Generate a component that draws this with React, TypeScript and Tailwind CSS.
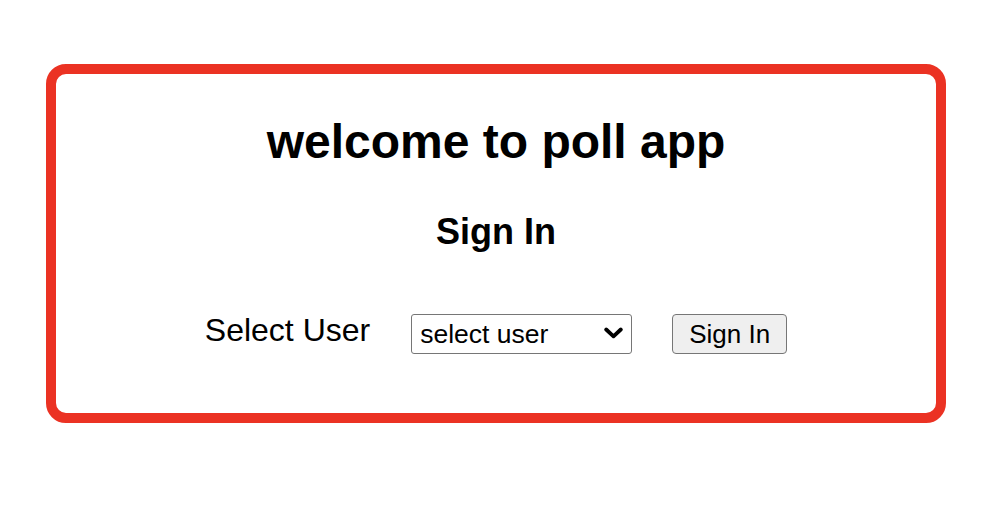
import React from "react";

export default function App() {
  return (
    <div className="w-[988px] h-[524px] bg-white overflow-hidden" style={{ fontFamily: '"Liberation Sans", Arial, sans-serif' }}>
      <div className="ml-[46px] mt-[64px] w-[900px] h-[359px] border-[10px] border-[#eb3223] rounded-[20px] flex flex-col items-center text-black">
        <h1 className="mt-[44px] text-[48px] leading-none font-bold">welcome to poll app</h1>
        <h2 className="mt-[48px] text-[36px] leading-none font-bold">Sign In</h2>
        <div className="mt-[64px] flex flex-row items-center">
          <label className="text-[32px] leading-none mb-2">Select User</label>
          <div className="relative ml-[41px] w-[221px] h-[40px]">
            <select
              className="appearance-none w-full h-full border border-[#767676] rounded-[3px] bg-white pl-[8px] text-[26.5px] leading-none text-black outline-none"
              defaultValue="select user"
            >
              <option value="select user">select user</option>
            </select>
            <svg
              className="absolute right-[9px] top-[13px] pointer-events-none"
              width="19"
              height="12"
              viewBox="0 0 19 12"
              fill="none"
            >
              <path d="M2.2 2.5 L9.5 9.3 L16.8 2.5" stroke="black" strokeWidth="3.8" strokeLinecap="round" strokeLinejoin="round" />
            </svg>
          </div>
          <button className="ml-[40px] w-[115px] h-[40px] bg-[#efefef] border border-[#767676] rounded-[4px] text-[26px] leading-none text-black">
            Sign In
          </button>
        </div>
      </div>
    </div>
  );
}
